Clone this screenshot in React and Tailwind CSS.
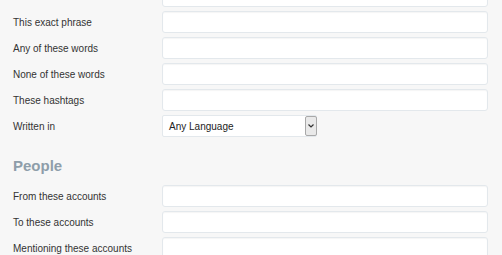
import React from 'react';

const textRows = ["", "This exact phrase", "Any of these words", "None of these words", "These hashtags"];
const peopleRows = ["From these accounts", "To these accounts", "Mentioning these accounts"];

const Field = ({ label }) => (
  <div className="flex items-center h-[22px]">
    <label className="w-[149px] shrink-0 text-[10px] text-[#333]">{label}</label>
    <input
      type="text"
      className="flex-1 h-[22px] bg-white border border-[#e3e8ec] rounded-[3px] shadow-[inset_0_1px_1px_rgba(0,0,0,0.04)] outline-none"
    />
  </div>
);

const App = () => {
  return (
    <main
      className="w-[502px] h-[255px] overflow-hidden bg-[#f7f7f7] pl-[13px] pr-[14px]"
      style={{ fontFamily: '"Liberation Sans", Arial, sans-serif' }}
    >
      <div className="-mt-[15px] flex flex-col gap-[4px]">
        {textRows.map((label, i) => (
          <Field key={i} label={label} />
        ))}

        {/* Written in */}
        <div className="flex items-center h-[22px]">
          <label className="w-[149px] shrink-0 text-[10px] text-[#333]">Written in</label>
          <div className="w-[155px] h-[22px] flex items-center bg-white border border-[#e3e8ec] rounded-[2px]">
            <span className="flex-1 pl-[6px] text-[10px] text-[#222]">Any Language</span>
            <div className="w-[12px] h-[20px] mr-[-1px] flex items-center justify-center bg-[#e9e9e9] border border-[#a9a9a9] rounded-[2px]">
              <svg width="6" height="4" viewBox="0 0 6 4">
                <path d="M0.5 0.5 L3 3 L5.5 0.5" fill="none" stroke="#333" strokeWidth="1.2" />
              </svg>
            </div>
          </div>
        </div>
      </div>

      <h2 className="mt-[21px] text-[15px] font-bold text-[#8e9eaa] leading-none">People</h2>

      <div className="mt-[12px] flex flex-col gap-[4px]">
        {peopleRows.map((label) => (
          <Field key={label} label={label} />
        ))}
      </div>
    </main>
  );
};

export default App;
